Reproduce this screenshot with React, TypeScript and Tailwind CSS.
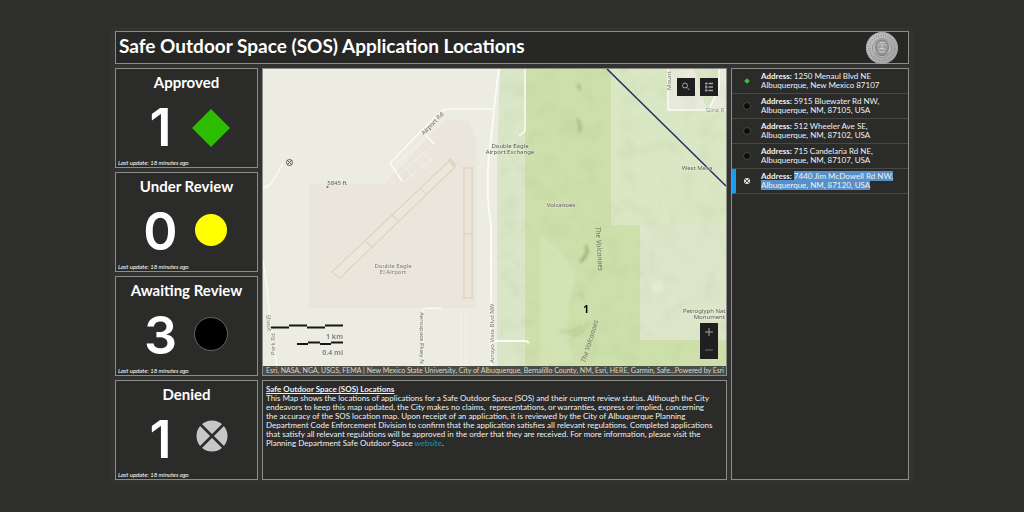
import type { ReactNode } from 'react'

type Status = 'approved' | 'review' | 'awaiting' | 'denied'

const indicators: { title: string; value: number; status: Status }[] = [
  { title: 'Approved', value: 1, status: 'approved' },
  { title: 'Under Review', value: 0, status: 'review' },
  { title: 'Awaiting Review', value: 3, status: 'awaiting' },
  { title: 'Denied', value: 1, status: 'denied' },
]

const addresses: { line1: string; line2: string; status: Status }[] = [
  { line1: '1250 Menaul Blvd NE', line2: 'Albuquerque, New Mexico 87107', status: 'approved' },
  { line1: '5915 Bluewater Rd NW,', line2: 'Albuquerque, NM, 87105, USA', status: 'awaiting' },
  { line1: '512 Wheeler Ave SE,', line2: 'Albuquerque, NM, 87102, USA', status: 'awaiting' },
  { line1: '715 Candelaria Rd NE,', line2: 'Albuquerque, NM, 87107, USA', status: 'awaiting' },
  { line1: '7440 Jim McDowell Rd NW,', line2: 'Albuquerque, NM, 87120, USA', status: 'denied' },
]

function StatusIcon({ status, className }: { status: Status; className: string }) {
  return (
    <svg viewBox="0 0 40 40" className={className} aria-hidden="true">
      {status === 'approved' && <path d="M20 1 39 20 20 39 1 20Z" fill="#2cbd00" />}
      {status === 'review' && <circle cx="20" cy="18" r="16" fill="#ffff00" />}
      {status === 'awaiting' && <circle cx="20" cy="18" r="16.5" fill="#000" stroke="#77776f" strokeWidth="0.8" />}
      {status === 'denied' && (
        <>
          <circle cx="21" cy="16" r="15.5" fill="#c6c6c6" />
          <path d="M9.500 4.500 32.500 27.500M32.500 4.500 9.500 27.500" stroke="#2b2b2a" strokeWidth="2.600" />
        </>
      )}
    </svg>
  )
}

function ListIcon({ status }: { status: Status }) {
  return (
    <svg viewBox="0 0 10 10" className="h-[10px] w-[10px] shrink-0" aria-hidden="true">
      {status === 'approved' && <path d="M5 2.200 7.800 5 5 7.800 2.200 5Z" fill="#3fc038" />}
      {status === 'awaiting' && <circle cx="5" cy="5" r="3.500" fill="#0c0c0c" stroke="#5a5a57" strokeWidth="0.7" />}
      {status === 'denied' && (
        <>
          <circle cx="5" cy="5" r="3" fill="#e4e4e4" />
          <path d="M3 3 7 7M7 3 3 7" stroke="#2b2b2a" strokeWidth="0.8" />
        </>
      )}
    </svg>
  )
}

function Seal() {
  return (
    <svg viewBox="0 0 32 32" className="h-8 w-8" role="img" aria-label="City seal">
      <defs>
        <linearGradient id="sealFill" x1="0" y1="0" x2="1" y2="1">
          <stop offset="0" stopColor="#d2d2d2" />
          <stop offset="0.5" stopColor="#b4b4b4" />
          <stop offset="1" stopColor="#a4a4a4" />
        </linearGradient>
      </defs>
      <circle cx="16" cy="16" r="16" fill="url(#sealFill)" />
      <circle cx="16" cy="16" r="12.600" fill="none" stroke="#8a8a8a" strokeWidth="2.600" strokeDasharray="0.9 1.500" opacity="0.8" />
      <circle cx="16" cy="16" r="15.400" fill="none" stroke="#9c9c9c" strokeWidth="0.6" />
      <circle cx="16" cy="16" r="9.600" fill="#b8b8b8" stroke="#858585" strokeWidth="0.7" />
      <path d="M10 12.500c0-3 3-4.500 6-4.500s6 1.500 6 4.500c1 3 0 6.500-2 8.500-2 1.800-6 1.800-8 0-2-2-3-5.500-2-8.500Z" fill="#9c9c9c" stroke="#6c6c6c" strokeWidth="0.8" />
      <path d="M12 13.500c1.500-2 3-2 4 0 1-2 2.500-2 4 0M16 13.500v4M12.500 17.500c1.500-1.500 5.500-1.500 7 0M13 20h6M14 10.500h4" fill="none" stroke="#dadada" strokeWidth="0.8" />
      <path d="M9.500 20.500c2 4 11 4 13 0" fill="none" stroke="#727272" strokeWidth="0.8" />
    </svg>
  )
}

function MapCanvas() {
  return (
    <svg
      viewBox="263 69 463 306"
      preserveAspectRatio="xMidYMid slice"
      className="block h-full w-full"
      role="img"
      aria-label="Application locations map"
    >
      <defs>
        <filter id="terrain" x="0" y="0" width="100%" height="100%" colorInterpolationFilters="sRGB">
          <feTurbulence type="fractalNoise" baseFrequency="0.05" numOctaves="4" seed="8" />
          <feColorMatrix values="0 0 0 0 0.55  0 0 0 0 0.62  0 0 0 0 0.38  2.600 0 0 0 -1.150" />
        </filter>
        <filter id="soft" x="-50%" y="-50%" width="200%" height="200%">
          <feGaussianBlur stdDeviation="1.600" />
        </filter>
      </defs>
      <rect x="263" y="69" width="463" height="306" fill="#ecece3" />
      <path d="M309 184H385L430 135 448 119 468 121 476 140V308H309Z" fill="#ebe6dc" />

      {/* open space parcels */}
      <path d="M500 69H525V375H497V160Z" fill="#d9e6c7" />
      <path d="M525 69H611V225H640V340H726V375H525Z" fill="#cde0ac" />
      <path d="M611 69H726V225H611Z" fill="#dae7c4" />
      <path d="M640 225H726V340H640Z" fill="#dde6ca" />
      <path d="M667 69H726V108L668 110Z" fill="#e9eadb" />
      <path d="M694 69H719V88L709 108H706Z" fill="#d9e5c4" />
      <rect x="500" y="69" width="226" height="306" filter="url(#terrain)" opacity="0.08" />
      <g filter="url(#soft)">
        <path d="M540 235Q565 250 576 275 562 320 572 360L540 366Z" fill="#d5e6b8" opacity="0.7" />
        <path d="M586 245Q589 254 582 259M580 262Q586 258 588 250" fill="none" stroke="#88a65c" strokeWidth="2.500" opacity="0.8" />
        <path d="M582 325Q575 334 560 331M588 322Q583 335 572 336M580 292 584 300" fill="none" stroke="#a3bf7c" strokeWidth="2" opacity="0.6" />
        <path d="M577 119Q582 124 579 132M578 84 580 90" fill="none" stroke="#88a65c" strokeWidth="3" opacity="0.6" />
        <circle cx="657" cy="287" r="6" fill="#e6ecd6" opacity="0.7" />
      </g>

      {/* roads */}
      <g fill="none" stroke="#fbfbf8" strokeLinejoin="round">
        <path d="M499 69C494 105 494 110 492 130 488 160 485 190 491 225V375" strokeWidth="2" />
        <path d="M525 69V131L519 136" strokeWidth="1.500" />
        <path d="M493 109H450Q443 109 438 114L390 163M424 133 434 144M390 163 402 181" strokeWidth="1.500" />
        <path d="M492 341H522Q527 340 529 343" strokeWidth="2" />
        <path d="M263 188Q271 187 275 177L283 164M263 260Q268 290 270 320L277 366M423 375V309Q423 308 441 308" strokeWidth="1.300" />
        <path d="M668 69V110H726M719 69V88L709 109" strokeWidth="1.500" />
        <path d="M461 310V366M466 310V366M492 262H497" strokeWidth="0.6" opacity="0.7" />
      </g>
      <g fill="none" stroke="#f7f6ef" strokeWidth="0.8">
        <path d="M397 160 421 184M402 155 412 166M407 150 432 174M413 145 436 165M393 166 425 139M399 174 434 145M405 181 438 153M396 185 384 176" opacity="0.7" />
      </g>

      {/* runways */}
      <g fill="none" stroke="#dcd7c0" strokeWidth="1.400">
        <path d="M449 161 455 167 340 278 332 272Z" fill="#ebe7da" />
        <path d="M420 188 426 194M392 215 398 221M366 241 372 248" />
        <path d="M449 159 455 166" strokeWidth="4" />
        <path d="M464 168H472V298H464ZM464 234H472M462 168H474M462 298H474" fill="#ece4da" />
      </g>

      <path d="M607 69 726 186" stroke="#1d2f66" strokeWidth="1.500" />

      {/* place labels */}
      <g
        className="font-['Noto_Sans',sans-serif]"
        fontSize="6"
        fill="#55584f"
        textAnchor="middle"
        stroke="#f2f2e8"
        strokeWidth="0.8"
        strokeOpacity="0.6"
        paintOrder="stroke"
      >
        <text x="510" y="148">Double Eagle</text>
        <text x="510" y="154">Airport Exchange</text>
        <text x="393" y="268" fill="#787770">Double Eagle</text>
        <text x="393" y="274" fill="#787770">El Airport</text>
        <text x="561" y="207">Volcanoes</text>
        <text x="337" y="185">5845 ft</text>
        <text x="697" y="170">West Mesa</text>
        <text x="683" y="313" textAnchor="start">Petroglyph Nati</text>
        <text x="725" y="319" textAnchor="end">Monument</text>
        <text x="706" y="112" textAnchor="start" fill="#8a8b86">Gina R</text>
        <text transform="translate(434 125) rotate(-46)" fill="#66665f">Airport Rd</text>
        <text transform="translate(420 312) rotate(90)" textAnchor="start" fill="#77776f">Aerospace Pkwy N</text>
        <text transform="translate(494 363) rotate(-90)" textAnchor="start" fill="#77776f">Arroyo Vista Blvd NW</text>
        <text transform="translate(671 90) rotate(-90)" textAnchor="start" fill="#77776f">Mount</text>
        <text transform="translate(266 315) rotate(84)" textAnchor="start" fill="#77776f">Shoot</text>
        <text transform="translate(275 355) rotate(-90)" textAnchor="start" fill="#77776f">Park Rd</text>
      </g>
      <g className="font-['Noto_Sans',sans-serif] italic" fontSize="7" fill="#6f746b" textAnchor="middle">
        <text transform="translate(597 249) rotate(86)">The Volcanoes</text>
        <text transform="translate(592 342) rotate(-73)">The Volcanoes</text>
      </g>
      <circle cx="327.500" cy="187" r="1" fill="#6b6754" />

      {/* application markers */}
      <g fill="none" stroke="#3c3c3a" strokeWidth="0.8">
        <circle cx="289.500" cy="162.500" r="3" />
        <path d="M287.400 160.400 291.600 164.600M291.600 160.400 287.400 164.600" />
      </g>
      <text x="586" y="313" textAnchor="middle" fontSize="10" fontWeight="700" className="font-['Open_Sans',sans-serif]">
        1
      </text>

      {/* scale bars */}
      <g fill="none" stroke="#181818" strokeWidth="2">
        <path d="M271 327.500H289M289 325.500H307M307 327.500H325M325 325.500H343" />
        <path d="M297 344H308M308 342.500H320M320 344H331M331 342.500H343" />
      </g>
      <g className="font-['Noto_Sans',sans-serif]" fontSize="7" fontWeight="700" fill="#8a8a84" textAnchor="end">
        <text x="343" y="339">1 km</text>
        <text x="343" y="355">0.4 mi</text>
      </g>
    </svg>
  )
}

function MapButton({ label, children }: { label: string; children: ReactNode }) {
  return (
    <button
      type="button"
      aria-label={label}
      className="flex h-[18px] w-[18px] items-center justify-center bg-[#1f1f1f] text-[#a3a3a3]"
    >
      {children}
    </button>
  )
}

function MapPanel() {
  return (
    <section className="relative row-span-3 overflow-hidden border border-[#8c8c88]">
      <div className="absolute inset-0">
        <MapCanvas />
      </div>
      <div className="absolute top-[9px] right-2 flex gap-[5px]">
        <MapButton label="Search">
          <svg viewBox="0 0 18 18" className="h-[18px] w-[18px]" fill="none" stroke="currentColor">
            <circle cx="8" cy="7.500" r="2.500" />
            <path d="M9.800 9.300 12.500 12" />
          </svg>
        </MapButton>
        <MapButton label="Legend">
          <svg viewBox="0 0 18 18" className="h-[18px] w-[18px]" fill="none" stroke="currentColor">
            <path d="M5 5.500h2.500M5 9h2.500M5 12.500h2.500M8.500 5.500h4.500M8.500 9h4.500M8.500 12.500h4.500" strokeWidth="1.300" />
            <path d="M6.200 4.500v9" strokeWidth="0.7" />
          </svg>
        </MapButton>
      </div>
      <div className="absolute right-2 bottom-4 flex flex-col">
        <MapButton label="Zoom in">
          <svg viewBox="0 0 18 18" className="h-[18px] w-[18px]" stroke="currentColor">
            <path d="M9 5v8M5 9h8" />
          </svg>
        </MapButton>
        <MapButton label="Zoom out">
          <svg viewBox="0 0 18 18" className="h-[18px] w-[18px]" stroke="#6f6f6f">
            <path d="M5 9h8" />
          </svg>
        </MapButton>
      </div>
      <div className="absolute inset-x-0 bottom-0 flex h-[9px] items-center justify-between bg-[#4b4c45] px-[3px] text-[7px] leading-[9px] whitespace-nowrap text-[#d6d6d2]">
        <span>
          Esri, NASA, NGA, USGS, FEMA | New Mexico State University, City of Albuquerque, Bernalillo County, NM, Esri, HERE, Garmin, Safe...
        </span>
        <span>Powered by Esri</span>
      </div>
    </section>
  )
}

function IndicatorCard({ title, value, status }: { title: string; value: number; status: Status }) {
  return (
    <section className="flex h-[100px] flex-col border border-[#8c8c88] bg-[#2b2b2a]">
      <h2 className="mt-[3px] text-center text-[15px] leading-5 font-bold">{title}</h2>
      <div className="flex flex-1 items-center justify-center gap-3 pt-1">
        <span className="w-9 text-center font-['Inter',sans-serif] text-[52px] leading-[60px] font-semibold">{value}</span>
        <StatusIcon status={status} className="h-10 w-10" />
      </div>
      <p className="px-[2px] text-[6px] leading-[8px] italic">Last update: 18 minutes ago</p>
    </section>
  )
}

export default function App() {
  return (
    <div className="min-h-screen bg-[#2e2e2c] pt-[27px] pb-7 font-['Lato',sans-serif] text-white">
      <main className="mx-auto flex w-full max-w-[802px] flex-col gap-1 bg-[#323231] p-1">
        <header className="flex h-[33px] items-center justify-between border border-[#8c8c88] bg-[#272726] pr-[10px] pb-1 pl-[3px]">
          <h1 className="text-[19px] leading-6 font-bold">Safe Outdoor Space (SOS) Application Locations</h1>
          <div className="pt-1">
            <Seal />
          </div>
        </header>

        <div className="grid grid-cols-[143px_1fr_178px] gap-1">
          <div className="flex flex-col gap-1">
            {indicators.map((item) => (
              <IndicatorCard key={item.title} {...item} />
            ))}
          </div>

          <div className="grid grid-rows-4 gap-1">
            <MapPanel />
            <section className="border border-[#8c8c88] bg-[#2b2b2a] px-[3px] py-1 text-[8px] leading-[9px] whitespace-nowrap text-[#f1f1f1]">
              <h2 className="font-bold underline">Safe Outdoor Space (SOS) Locations</h2>
              <p>
                This Map shows the locations of applications for a Safe Outdoor Space (SOS) and their current review status. Although the City
                <br />
                endeavors to keep this map updated, the City makes no claims, &nbsp;representations, or warranties, express or implied, concerning
                <br />
                the accuracy of the SOS location map. Upon receipt of an application, it is reviewed by the City of Albuquerque Planning
                <br />
                Department Code Enforcement Division to confirm that the application satisfies all relevant regulations. Completed applications
                <br />
                that satisfy all relevant regulations will be approved in the order that they are received. For more information, please visit the
                <br />
                Planning Department Safe Outdoor Space{' '}
                <a href="#website" className="text-[#1293c9]">
                  website
                </a>
                .
              </p>
            </section>
          </div>

          <ul className="border border-[#8c8c88] bg-[#2b2b2a] text-[8px] leading-[9px] text-[#f1f1f1]">
            {addresses.map((item) => (
              <li
                key={item.line1}
                className={`flex h-[25px] items-center gap-[9px] border-b border-[#484846] ${
                  item.status === 'denied' ? 'border-l-4 border-l-[#1c9cf0] pl-[6px]' : 'pl-[10px]'
                }`}
              >
                <ListIcon status={item.status} />
                <p className="whitespace-nowrap">
                  <strong>Address:</strong>{' '}
                  <span className={item.status === 'denied' ? 'bg-[#5790c8]' : ''}>
                    {item.line1}
                    <br />
                    {item.line2}
                  </span>
                </p>
              </li>
            ))}
          </ul>
        </div>
      </main>
    </div>
  )
}
